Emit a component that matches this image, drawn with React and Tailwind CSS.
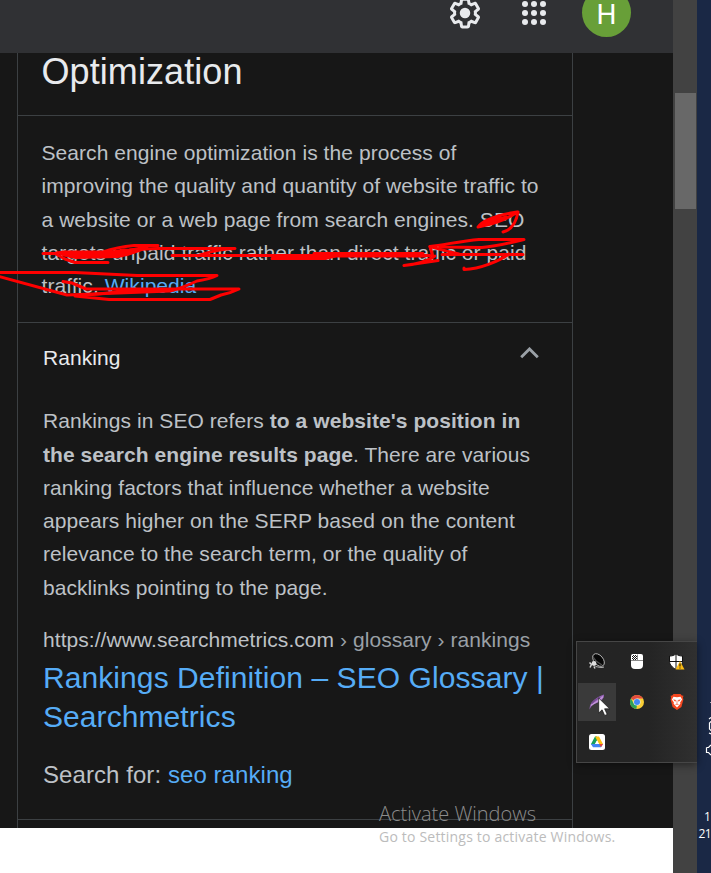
const para = "whitespace-nowrap text-[21px] leading-[33.25px] tracking-[0.065px] text-[#bdc1c6]";

function Header() {
  return (
    <header className="h-[53px] shrink-0 bg-[#303134] pl-[447px]">
      <div className="flex">
        <svg className="mt-[-5px] size-9" viewBox="0 0 24 24" fill="#e8eaed">
          <path d="M13.85 22.25h-3.7c-.74 0-1.36-.54-1.45-1.27l-.27-1.89c-.27-.14-.53-.29-.79-.46l-1.8.72c-.7.26-1.47-.03-1.81-.65L2.2 15.53c-.35-.66-.2-1.44.36-1.88l1.53-1.19c-.01-.15-.02-.3-.02-.46 0-.15.01-.31.02-.46l-1.52-1.19c-.59-.45-.74-1.26-.37-1.88l1.85-3.19c.34-.62 1.11-.9 1.79-.63l1.81.73c.26-.17.52-.32.78-.46l.27-1.91c.09-.7.71-1.25 1.44-1.25h3.7c.74 0 1.36.54 1.45 1.27l.27 1.89c.27.14.53.29.79.46l1.8-.72c.71-.26 1.48.03 1.82.65l1.84 3.18c.36.66.2 1.44-.36 1.88l-1.52 1.19c.01.15.02.3.02.46s-.01.31-.02.46l1.52 1.19c.56.45.72 1.23.37 1.86l-1.86 3.22c-.34.62-1.11.9-1.8.63l-1.8-.72c-.26.17-.52.32-.78.46l-.27 1.91c-.1.68-.72 1.22-1.46 1.22zm-3.23-2h2.76l.37-2.55.53-.22c.44-.18.88-.44 1.34-.78l.45-.34 2.38.96 1.38-2.4-2.03-1.58.07-.56c.03-.26.06-.51.06-.78s-.03-.53-.06-.78l-.07-.56 2.03-1.58-1.39-2.4-2.39.96-.45-.35c-.42-.32-.87-.58-1.33-.77l-.52-.22-.37-2.55h-2.76l-.37 2.55-.53.21c-.44.19-.88.44-1.34.79l-.45.33-2.38-.95-1.39 2.39 2.03 1.58-.07.56a7 7 0 0 0-.06.79c0 .26.02.53.06.78l.07.56-2.03 1.58 1.38 2.4 2.39-.96.45.35c.43.33.86.58 1.33.77l.53.22z" />
          <circle cx="12" cy="12" r="3.5" />
        </svg>
        <svg className="ml-[39px] h-[26px] w-6" viewBox="0 0 24 26" fill="#e8eaed">
          {[3, 12, 21].map((x) => [4, 13, 22].map((y) => <circle key={x + "-" + y} cx={x} cy={y} r="3" />))}
        </svg>
        <div className="ml-9 mt-[-12px] flex size-[49px] items-center justify-center rounded-full bg-[#689f38] pt-[4px] font-[Roboto,sans-serif] text-[28px] leading-[24px] text-white">H</div>
      </div>
    </header>
  );
}

function Card() {
  return (
    <main className="h-[775px] bg-[#171717] pl-[17px]">
      <div className="h-full w-[556px] border-x border-[#3c4043]">
        <div className="h-[63px] border-b border-[#3c4043] pl-[23.500px] pt-px">
          <h1 className="whitespace-nowrap text-[36px] leading-9 tracking-[0.08px] text-[#e8eaed]">Optimization</h1>
        </div>
        <section className="h-[207px] border-b border-[#3c4043] pl-[23.5px] pt-[20.1px]">
          <p className={para}>
            Search engine optimization is the process of<br />
            improving the quality and quantity of website traffic to<br />
            a website or a web page from search engines. SEO<br />
            targets unpaid traffic rather than direct traffic or paid<br />
            traffic. <a className="text-[#56acf6]">Wikipedia</a>
          </p>
        </section>
        <section className="h-[497px] border-b border-[#3c4043] pl-[25px] pt-[23px]">
          <div className="flex h-6 items-start justify-between pr-[33px] text-[21px] leading-6 tracking-[0.06px] text-[#e8eaed]">
            <span>Ranking</span>
            <svg className="mt-[1px] h-3 w-[19px]" viewBox="0 0 19 12" fill="none" stroke="#9aa0a6" strokeWidth="2.8">
              <path d="M1.200 10.200 9.500 1.900l8.300 8.300" />
            </svg>
          </div>
          <p className={"mt-[34.4px] " + para}>
            Rankings in SEO refers <b>to a website&#39;s position in</b><br />
            <b>the search engine results page</b>. There are various<br />
            ranking factors that influence whether a website<br />
            appears higher on the SERP based on the content<br />
            relevance to the search term, or the quality of<br />
            backlinks pointing to the page.
          </p>
          <div className="mt-6 h-6 whitespace-nowrap text-[21px] leading-6 tracking-[0.06px] text-[#bdc1c6]">
            https://www.searchmetrics.com<span className="text-[#9aa0a6]"> › glossary › rankings</span>
          </div>
          <h3 className="mt-[6.6px] whitespace-nowrap text-[30px] leading-[39px] tracking-[0.08px] text-[#56acf6]">
            Rankings Definition – SEO Glossary |<br />Searchmetrics
          </h3>
          <div className="mt-[24.4px] whitespace-nowrap text-2xl leading-7 tracking-[0.07px] text-[#bdc1c6]">
            Search for: <a className="text-[#56acf6]">seo ranking</a>
          </div>
        </section>
      </div>
    </main>
  );
}

function Scribbles() {
  return (
    <svg className="absolute left-0 top-0" width="711" height="873" fill="none" stroke="#ff0000" strokeWidth="3" strokeLinecap="round" strokeLinejoin="round">
      <path d="M43 253.500H55L65 259L75 262.500H108" />
      <path d="M56 253L64 252H103Q117 247 134 245.500H158M107 253Q130 251 146 247M128 254Q140 251 147 247" />
      <path d="M60 253H108L124 250L136 251Q128 255 118 256.500L76 257.500L64 255Z" fill="#ff0000" />
      <path d="M130 250Q150 248 164 248.500H235C222 249 212 251 200 255" />
      <path d="M172 255.500H430M272 258.500H325L335 256" />
      <path d="M314 253.500H423M315 256H425" />
      <path d="M404 265.500C415 264.500 426 262 435 256M404 265.500L438 260.500M433 257L430 246.500C448 244 463 241 479 239.500H524C510 243 498 246 482 247.500L440 247" />
      <path d="M430 246.500C439 249 449 252 459 254M442 254.500H523M509 254C499 261 481 269 464 269.500V268" />
      <path d="M478 227Q485 217 517 212Q504 222 478 227ZM518 212Q515 229 503 232" />
      <path d="M480 226L506 217M484 222L500 216.500" />
      <path d="M-3 272.500H75L137 275.500H217Q210 279 197 281Q182 288 170 291L67 295L-3 276" />
      <path d="M63 281.500L72 283L86 289H239Q231 293 221 295L210 299.500H109L75 296L98 294L122 291.500L170 290" />
    </svg>
  );
}

function Speaker() {
  return (
    <svg width="18" height="18" viewBox="0 0 18 18">
      <ellipse cx="10.500" cy="7" rx="7.300" ry="4.600" transform="rotate(50 10.500 7)" fill="#060606" stroke="#b5b5b5" strokeWidth=".9" />
      <path d="M5 4l3 4 6 4" stroke="#4d4d4d" strokeWidth="1.300" fill="none" />
      <circle cx="6" cy="10.500" r="2.400" fill="#ddd" />
      <path d="M1.500 9.500l2 2-1.500 3m4-1 1 2" stroke="#d4d4d4" fill="none" strokeWidth="1.500" />
      <path d="M7.500 13.500c3 .5 6 1.500 8.500.5" stroke="#bbb" fill="none" />
    </svg>
  );
}

function MouseIcon() {
  return (
    <svg width="16" height="18" viewBox="0 0 16 18">
      <path d="M4 1h8q2 0 2 2v9q0 4-4 4H6q-4 0-4-4V3q0-2 2-2z" fill="#fff" />
      <path d="M3 2h5v5H3z" fill="#111" />
      <path d="M3 2h1v1H3zm2 0h1v1H5zm2 0h1v1H7zM4 3h1v1H4zm2 0h1v1H6zM3 4h1v1H3zm2 0h1v1H5zm2 0h1v1H7zM4 5h1v1H4zm2 0h1v1H6zM3 6h1v1H3zm2 0h1v1H5zm2 0h1v1H7z" fill="#fff" />
      <path d="M8.500 1.500v6M2 7.500h12" stroke="#8b8b8b" strokeWidth="1" />
    </svg>
  );
}

function Shield() {
  return (
    <svg width="18" height="18" viewBox="0 0 18 18">
      <path d="M8 .8C6 2.500 4 3 1.500 3v5c0 4 3 6.500 6.500 8.500 3.500-2 6.500-4.500 6.500-8.500V3C12 3 10 2.500 8 .8z" fill="#fff" stroke="#111" />
      <path d="M8 1v15M2 8.500h12.500" stroke="#111" strokeWidth="1" />
      <path d="M12 8 16.500 16.500H7.500z" fill="#fbbc13" />
      <path d="M12 10.500v3m0 1v1" stroke="#322400" strokeWidth="1.200" />
    </svg>
  );
}

function Feather() {
  return (
    <svg width="18" height="18" viewBox="0 0 18 18">
      <path d="M1.500 16.500C1.500 9 9 3.500 16 1.500c.3 4-2.500 7-8.500 9-3 1-4.500 3-6 6z" fill="#9663b7" />
      <path d="M3 12.500C7 9 11 9 15 3.500" fill="none" stroke="#c295d8" strokeWidth="1.400" />
      <path d="M3.500 10.500C6 7.500 9 5.500 12 4" stroke="#74498f" fill="none" strokeWidth="1.200" />
    </svg>
  );
}

function Chrome() {
  return (
    <svg width="16" height="16" viewBox="0 0 24 24">
      <circle cx="12" cy="12" r="10.500" fill="#f9ce35" />
      <path d="M12 12 2.900 6.750a10.500 10.500 0 0 1 18.200 0H12z" fill="#e34b3e" />
      <path d="M2.900 6.750 7.450 14.600 12 17l-1 5.450A10.500 10.500 0 0 1 2.900 6.750z" fill="#2fa057" />
      <circle cx="12" cy="12" r="5.300" fill="#e8eefa" />
      <circle cx="12" cy="12" r="4.500" fill="#4388f1" />
    </svg>
  );
}

function Brave() {
  return (
    <svg width="16" height="18" viewBox="0 0 16 18">
      <path d="M4.500 1h7l1.300 1.500 1.700.3-.6 2 .5 1.700-2 7.500L8 17l-4.400-3-2-7.500.5-1.700-.6-2 1.700-.3z" fill="#f4471f" />
      <path d="M4.500 3.800 8 4.200l3.500-.4 1.600 2.700-2 3 .3 1.300L8 14.500l-3.400-3.700.3-1.300-2-3z" fill="#fff" />
      <path d="M4.700 6.800l2 .5-.4 1zm6.600 0-2 .5.4 1zM8 7.500v2.500M6.500 11.500 8 10.700l1.500.8" fill="#f4471f" stroke="#f4471f" strokeWidth=".6" />
    </svg>
  );
}

function Drive() {
  return (
    <svg width="16" height="16" viewBox="0 0 16 16">
      <rect width="16" height="16" rx="2.500" fill="#fff" />
      <path d="M6 2.500h2L8 6.500 4.500 13 2 10z" fill="#18a05b" />
      <path d="M6 2.500h4l4 7.500h-4z" fill="#fbc116" />
      <path d="M2 10h12l-2 3.200H4z" fill="#4285f4" />
      <path d="M14 10h-3.700l1.700 3.200z" fill="#ea4335" />
      <path d="M8 6.300 10 10H6z" fill="#fff" />
    </svg>
  );
}

function Tray() {
  const cell = "flex items-center justify-center";
  return (
    <div className="absolute left-[576px] top-[641px] h-[122px] w-[121px] border border-r-0 border-[#464646] bg-linear-to-r from-[#242424] from-60% to-[#303030] pl-px pt-px shadow-[0_2px_8px_rgba(0,0,0,0.45)]">
      <div className="grid grid-cols-[38px_38px_38px] grid-rows-[38px_38px_38px] gap-[2px]">
        <div className={cell}><Speaker /></div>
        <div className={cell}><MouseIcon /></div>
        <div className={cell}><Shield /></div>
        <div className={cell + " bg-[#3a3a3a]"}><Feather /></div>
        <div className={cell}><Chrome /></div>
        <div className={cell}><Brave /></div>
        <div className={cell}><Drive /></div>
      </div>
      <svg className="absolute left-[21px] top-[55px]" width="13" height="20" viewBox="0 0 13 20">
        <path d="M.7 1v15l3.400-3.200 2.600 5.700 2.500-1.100-2.600-5.600h5z" fill="#fff" stroke="#111" strokeWidth=".7" />
      </svg>
    </div>
  );
}

function Taskbar() {
  return (
    <aside className="relative w-[14px] overflow-hidden bg-[#1a2845] font-['Open_Sans',sans-serif] text-xs text-white">
      <svg className="block" width="14" height="800" viewBox="0 0 14 800" fill="none" stroke="#fff" strokeWidth="1.200">
        <path d="M13 702.500h2" opacity=".6" />
        <path d="M14 717.500l-2 1.500M15 721.500h-1l-1.500 1.500v6l1.500 1.500h1M12 733l2 1M9.500 747.500h2l2.500-2.500M9.500 747.500v5h2l2.500 2.500" />
      </svg>
      <div className="ml-[7px] mt-[8px] whitespace-nowrap leading-[17px]">1</div>
      <div className="ml-[1.500px] whitespace-nowrap leading-[17px] tracking-[-0.5px]">21</div>
    </aside>
  );
}

export default function App() {
  return (
    <div className="relative flex h-[873px] w-[711px] overflow-hidden bg-white font-['Liberation_Sans',Arial,sans-serif]">
      <div className="flex w-[673px] flex-col">
        <Header />
        <Card />
      </div>
      <div className="w-6 bg-[#424242] pl-[2px] pt-[93px]">
        <div className="h-[116px] w-[21px] bg-[#686868]" />
      </div>
      <Taskbar />
      <Scribbles />
      <div className="absolute left-[379px] top-[800px] whitespace-nowrap font-['Open_Sans',sans-serif]">
        <div className="text-[20px] leading-7 font-light text-[#8c8c8c]">Activate Windows</div>
        <div className="text-[14px] leading-[18px] tracking-[0.2px] text-[#bcbcbc]">Go to Settings to activate Windows.</div>
      </div>
      <Tray />
    </div>
  );
}
